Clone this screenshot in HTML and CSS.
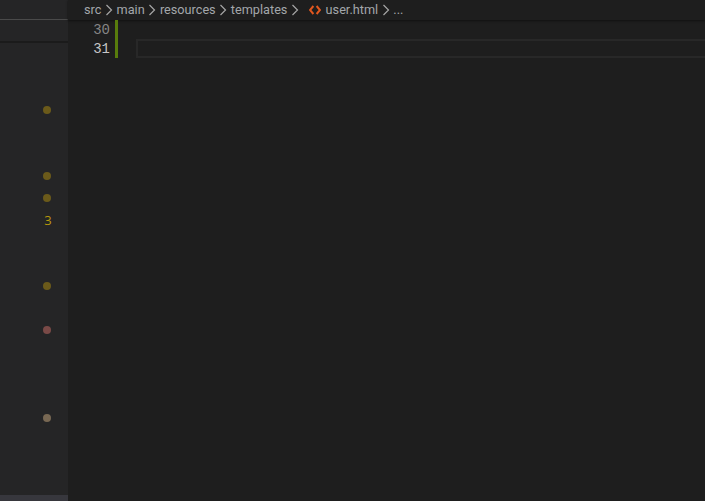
FILE: index.html
```html
<!DOCTYPE html>
<html lang="en">
<head>
<meta charset="utf-8">
<title>user.html</title>
<link rel="stylesheet" href="styles.css">
</head>
<body>
<div class="app">
  <aside class="sidebar">
    <div class="side-top"></div>
    <div class="side-section"></div>
    <div class="side-list">
      <div class="row"></div>
      <div class="row"></div>
      <div class="row"><span class="dot dot-warn"></span></div>
      <div class="row"></div>
      <div class="row"></div>
      <div class="row"><span class="dot dot-warn"></span></div>
      <div class="row"><span class="dot dot-warn"></span></div>
      <div class="row"><span class="count">3</span></div>
      <div class="row"></div>
      <div class="row"></div>
      <div class="row"><span class="dot dot-warn"></span></div>
      <div class="row"></div>
      <div class="row"><span class="dot dot-error"></span></div>
      <div class="row"></div>
      <div class="row"></div>
      <div class="row"></div>
      <div class="row"><span class="dot dot-mod"></span></div>
    </div>
    <div class="side-scroll"></div>
  </aside>
  <main class="editor">
    <nav class="crumbs">
      <span>src</span>
      <svg class="chev" viewBox="0 0 8 12"><path d="M1.5 1l5 5-5 5"/></svg>
      <span>main</span>
      <svg class="chev" viewBox="0 0 8 12"><path d="M1.5 1l5 5-5 5"/></svg>
      <span>resources</span>
      <svg class="chev" viewBox="0 0 8 12"><path d="M1.5 1l5 5-5 5"/></svg>
      <span>templates</span>
      <svg class="chev" viewBox="0 0 8 12"><path d="M1.5 1l5 5-5 5"/></svg>
      <svg class="file-icon" viewBox="0 0 12 10"><path d="M4.4 1L1 5l3.4 4M7.6 1L11 5 7.6 9"/></svg>
      <span>user.html</span>
      <svg class="chev" viewBox="0 0 8 12"><path d="M1.5 1l5 5-5 5"/></svg>
      <span>...</span>
    </nav>
    <div class="code">
      <div class="line">
        <span class="num">30</span>
        <span class="mark"></span>
        <span class="content"></span>
      </div>
      <div class="line">
        <span class="num num-active">31</span>
        <span class="mark"></span>
        <span class="content content-active"></span>
      </div>
    </div>
  </main>
</div>
</body>
</html>
```

FILE: styles.css
```css
* { box-sizing: border-box; }
html, body { margin: 0; height: 100%; background: #1e1e1e; overflow: hidden; }
.app { display: flex; height: 100vh; }

.sidebar {
  width: 68px;
  flex: none;
  display: flex;
  flex-direction: column;
  background: #252526;
}
.side-top { height: 20px; flex: none; border-bottom: 1px solid #4a4a4a; }
.side-section { height: 23px; flex: none; border-bottom: 2px solid #1b1b1b; }
.side-list { flex: 1; padding-top: 12px; }
.row {
  height: 22px;
  display: flex;
  align-items: center;
  justify-content: flex-end;
  padding-right: 17px;
}
.dot { width: 8px; height: 8px; border-radius: 50%; }
.dot-warn { background: #6b5a1a; }
.dot-error { background: #7a4a47; }
.dot-mod { background: #786853; }
.count {
  width: 8px;
  margin-right: -1px;
  font: 13px/22px "Open Sans", sans-serif;
  color: #b8980c;
  text-align: center;
}
.side-scroll { height: 6px; flex: none; background: #37373d; }

.editor { flex: 1; min-width: 0; display: flex; flex-direction: column; }
.crumbs {
  height: 20px;
  flex: none;
  display: flex;
  align-items: center;
  padding: 0 0 1px 16px;
  font: 12.7px/17px Roboto, sans-serif;
  color: #a3a7ab;
  box-shadow: 0 1px 2px #111;
  white-space: nowrap;
}
.chev { width: 8px; height: 12px; margin: 0 3.6px; fill: none; stroke: #a6a6a6; stroke-width: 1.2; }
.file-icon { width: 12px; height: 10px; margin: 0 5px 0 6px; fill: none; stroke: #e2571e; stroke-width: 2; }

.code { font: 14px/19px "Liberation Mono", monospace; }
.line { display: flex; height: 19px; }
.num { width: 42px; flex: none; padding-top: 1px; text-align: right; color: #858585; }
.num-active { color: #c6c6c6; }
.mark { width: 3px; margin-left: 5px; flex: none; background: #587c0c; }
.content { flex: 1; margin-left: 18px; }
.content-active { border: 2px solid #282828; border-right: 0; }
```
